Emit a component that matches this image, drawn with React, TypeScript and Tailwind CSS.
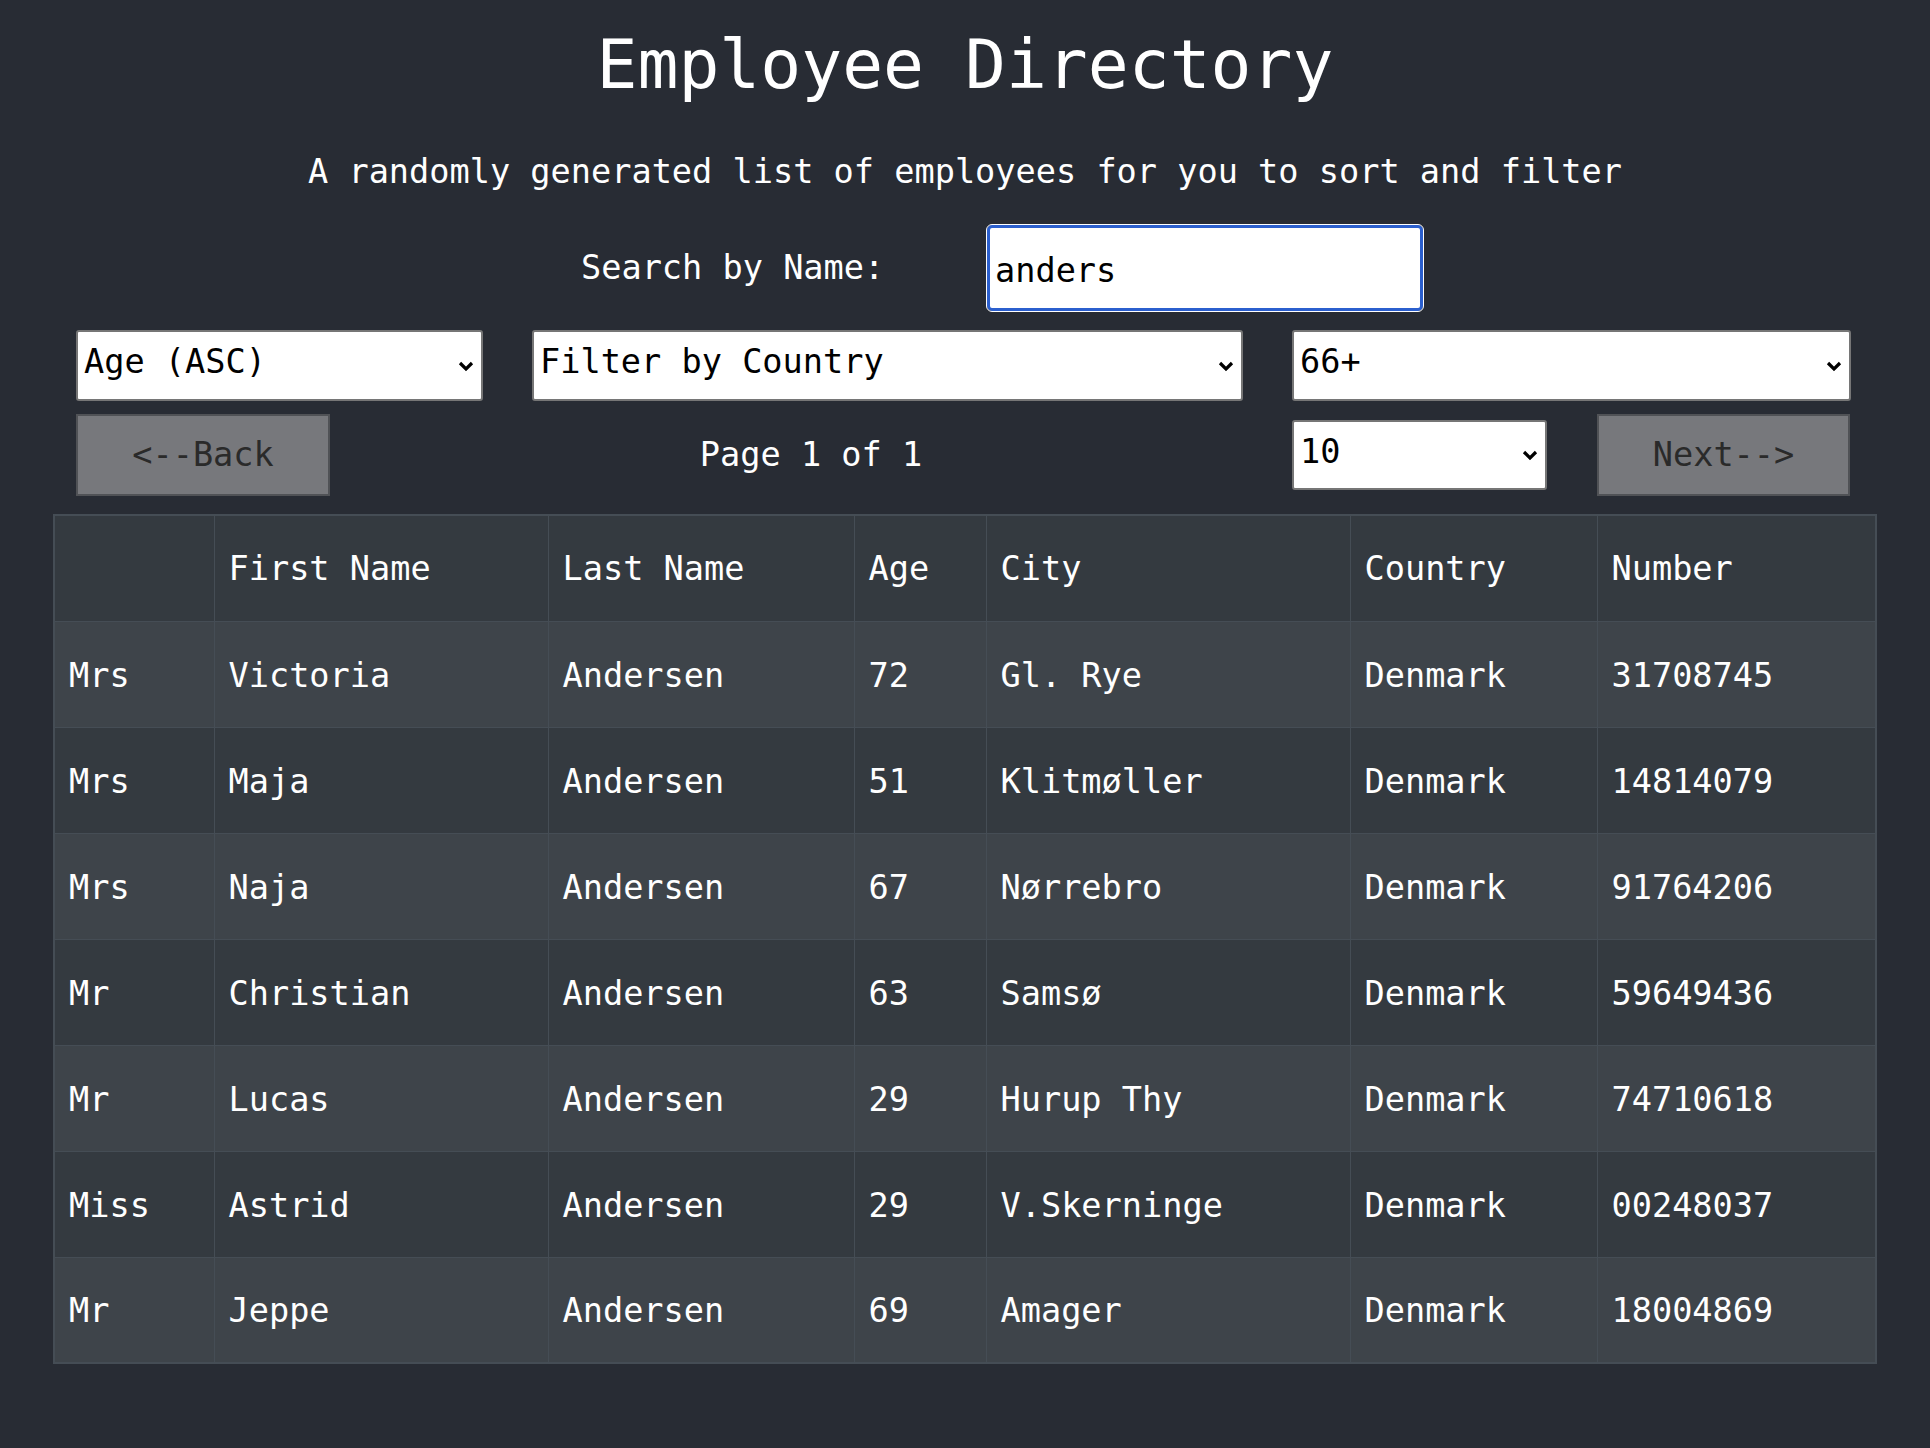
import { useState } from "react";

// Employee directory: zoek, sorteer en filter een lijst medewerkers.
type Employee = {
  title: string;
  first: string;
  last: string;
  age: number;
  city: string;
  country: string;
  number: string;
};

const employees: Employee[] = [
  { title: "Mrs", first: "Victoria", last: "Andersen", age: 72, city: "Gl. Rye", country: "Denmark", number: "31708745" },
  { title: "Mrs", first: "Maja", last: "Andersen", age: 51, city: "Klitmøller", country: "Denmark", number: "14814079" },
  { title: "Mrs", first: "Naja", last: "Andersen", age: 67, city: "Nørrebro", country: "Denmark", number: "91764206" },
  { title: "Mr", first: "Christian", last: "Andersen", age: 63, city: "Samsø", country: "Denmark", number: "59649436" },
  { title: "Mr", first: "Lucas", last: "Andersen", age: 29, city: "Hurup Thy", country: "Denmark", number: "74710618" },
  { title: "Miss", first: "Astrid", last: "Andersen", age: 29, city: "V.Skerninge", country: "Denmark", number: "00248037" },
  { title: "Mr", first: "Jeppe", last: "Andersen", age: 69, city: "Amager", country: "Denmark", number: "18004869" },
];

const columns = ["", "First Name", "Last Name", "Age", "City", "Country", "Number"];
const widths = ["w-[160px]", "w-[334px]", "w-[306px]", "w-[132px]", "w-[364px]", "w-[247px]", "w-[279px]"];

const mono = "font-['DejaVu_Sans_Mono','Liberation_Mono',monospace]";

// Select met eigen chevron rechts (zoals de native pijl in de browser).
function Select({ value, className }: { value: string; className: string }) {
  return (
    <div className={`relative ${className}`}>
      <select className="h-full w-full appearance-none rounded-[3px] border-2 border-[#767676] bg-white pb-[7px] pl-[6px] text-black">
        <option>{value}</option>
      </select>
      <svg
        className="pointer-events-none absolute right-[9px] top-1/2 -translate-y-1/2"
        width="16"
        height="11"
        viewBox="0 0 16 11"
        fill="none"
      >
        <path d="M2 2.5 L8 8.5 L14 2.5" stroke="black" strokeWidth="3.2" />
      </svg>
    </div>
  );
}

export default function App() {
  const [search, setSearch] = useState("anders");

  return (
    <div className={`min-h-[1448px] bg-[#282c34] text-white ${mono} text-[33.6px] leading-[40px]`}>
      <h1 className="pt-[25px] text-center text-[68px] leading-[80px]">Employee Directory</h1>
      <p className="mt-[47px] text-center">A randomly generated list of employees for you to sort and filter</p>

      <div className="mt-[33px] flex items-center pl-[581px]">
        <label className="w-[406px]">Search by Name:</label>
        <input
          value={search}
          onChange={(e) => setSearch(e.target.value)}
          className="h-[86px] w-[436px] rounded-[5px] border-[3px] border-[#2b5fce] bg-white px-[5px] pt-[4px] text-black outline outline-1 outline-white"
        />
      </div>

      <div className="mt-[19px] flex gap-[49px] pl-[76px] pr-[79px]">
        <Select value="Age (ASC)" className="h-[71px] w-[407px]" />
        <Select value="Filter by Country" className="h-[71px] w-[711px]" />
        <Select value="66+" className="h-[71px] w-[559px]" />
      </div>

      <div className="mt-[13px] flex items-center pl-[76px] pr-[80px]">
        <button className="h-[82px] w-[254px] border-2 border-[#505256] bg-[#77787c] text-[#2a2a2a]">&lt;--Back</button>
        <div className="flex-1 text-center">Page 1 of 1</div>
        <Select value="10" className="h-[70px] w-[255px]" />
        <button className="ml-[50px] h-[82px] w-[253px] border-2 border-[#505256] bg-[#77787c] text-[#2a2a2a]">Next--&gt;</button>
      </div>

      <table className="mt-[18px] ml-[53px] w-[1822px] table-fixed border-collapse border-2 border-[#454d55] bg-[#343a40]">
        <colgroup>
          {widths.map((w, i) => (
            <col key={i} className={w} />
          ))}
        </colgroup>
        <thead>
          <tr className="h-[106px]">
            {columns.map((c, i) => (
              <th key={i} className="border border-[#454d55] px-[14px] pt-[2px] text-left font-normal">
                {c}
              </th>
            ))}
          </tr>
        </thead>
        <tbody>
          {employees.map((e, i) => (
            <tr key={i} className={i % 2 === 0 ? "h-[106px] bg-[#3e444a]" : "h-[106px]"}>
              <td className="border border-[#454d55] px-[14px] pt-[3px]">{e.title}</td>
              <td className="border border-[#454d55] px-[14px] pt-[3px]">{e.first}</td>
              <td className="border border-[#454d55] px-[14px] pt-[3px]">{e.last}</td>
              <td className="border border-[#454d55] px-[14px] pt-[3px]">{e.age}</td>
              <td className="border border-[#454d55] px-[14px] pt-[3px]">{e.city}</td>
              <td className="border border-[#454d55] px-[14px] pt-[3px]">{e.country}</td>
              <td className="border border-[#454d55] px-[14px] pt-[3px]">{e.number}</td>
            </tr>
          ))}
        </tbody>
      </table>
    </div>
  );
}
